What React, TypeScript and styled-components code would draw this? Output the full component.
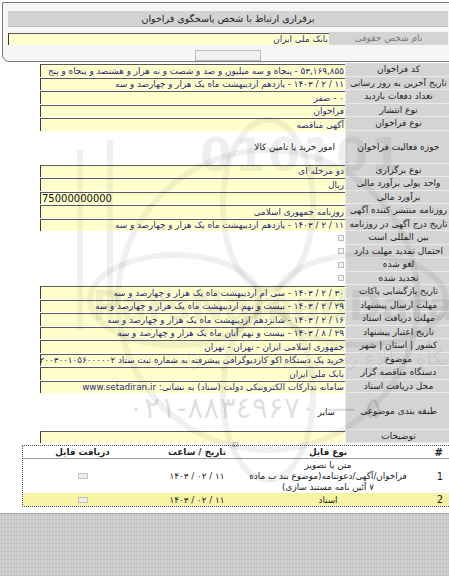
import React from 'react';
import styled, { createGlobalStyle } from 'styled-components';

const GlobalStyle = createGlobalStyle`
    html, body {
        margin: 0;
        padding: 0;
        background: #fff;
    }
    body {
        width: 449px;
        height: 576px;
        overflow: hidden;
        font-family: "DejaVu Sans", Tahoma, sans-serif;
    }
`;

type Info = { label: string; value?: string; kind?: 'field' | 'plain' | 'check' | 'ltr'; h?: number };

const infoRows: Info[] = [
    { label: 'کد فراخوان', value: '۵۳,۱۶۹,۸۵۵ - پنجاه و سه میلیون و صد و شصت و نه هزار و هشتصد و پنجاه و پنج' },
    { label: 'تاریخ آخرین به روز رسانی', value: '۱۱ / ۲ / ۱۴۰۳ - یازدهم اردیبهشت ماه یک هزار و چهارصد و سه' },
    { label: 'تعداد دفعات بازدید', value: '۰ - صفر' },
    { label: 'نوع انتشار', value: 'فراخوان' },
    { label: 'نوع فراخوان', value: 'آگهی مناقصه' },
    { label: 'حوزه فعالیت فراخوان', value: 'امور خرید یا تامین کالا', kind: 'plain', h: 33 },
    { label: 'نوع برگزاری', value: 'دو مرحله ای' },
    { label: 'واحد پولی برآورد مالی', value: 'ریال' },
    { label: 'برآورد مالی', value: '75000000000', kind: 'ltr' },
    { label: 'روزنامه منتشر کننده آگهی', value: 'روزنامه جمهوری اسلامی' },
    { label: 'تاریخ درج آگهی در روزنامه', value: '۱۱ / ۲ / ۱۴۰۳ - یازدهم اردیبهشت ماه یک هزار و چهارصد و سه' },
    { label: 'بین المللی است', kind: 'check' },
    { label: 'احتمال تمدید مهلت دارد', kind: 'check' },
    { label: 'لغو شده', kind: 'check' },
    { label: 'تجدید شده', kind: 'check' },
    { label: 'تاریخ بازگشایی پاکات', value: '۳۰ / ۲ / ۱۴۰۳ - سی ام اردیبهشت ماه یک هزار و چهارصد و سه' },
    { label: 'مهلت ارسال پیشنهاد', value: '۲۹ / ۲ / ۱۴۰۳ - بیست و نهم اردیبهشت ماه یک هزار و چهارصد و سه' },
    { label: 'مهلت دریافت اسناد', value: '۱۶ / ۲ / ۱۴۰۳ - شانزدهم اردیبهشت ماه یک هزار و چهارصد و سه' },
    { label: 'تاریخ اعتبار پیشنهاد', value: '۲۹ / ۸ / ۱۴۰۳ - بیست و نهم آبان ماه یک هزار و چهارصد و سه' },
    { label: 'کشور | استان | شهر', value: 'جمهوری اسلامی ایران - تهران - تهران' },
    { label: 'موضوع', value: 'خرید یک دستگاه اکو کاردیوگرافی پیشرفته به شماره ثبت ستاد ۲۰۰۳۰۰۱۰۵۶۰۰۰۰۰۲' },
    { label: 'دستگاه مناقصه گزار', value: 'بانک ملی ایران' },
    { label: 'محل دریافت اسناد', value: 'سامانه تدارکات الکترونیکی دولت (ستاد) به نشانی: www.setadiran.ir' },
    { label: 'طبقه بندی موضوعی', value: 'سایر', kind: 'plain', h: 37 },
    { label: 'توضیحات', value: '', h: 13 },
];

const App: React.FC = () => {
    return (
        <Page dir="rtl">
            <GlobalStyle />
            <Content>
                <Panel>
                    <PanelHeader>برقراری ارتباط با شخص پاسخگوی فراخوان</PanelHeader>
                    <PanelRow>
                        <PanelLabel>نام شخص حقوقی</PanelLabel>
                        <Field>بانک ملی ایران</Field>
                    </PanelRow>
                    <PanelButton />
                </Panel>

                <InfoTable>
                    {infoRows.map((r, i) => (
                        <Row key={i} $h={r.h}>
                            <Label>
                                <span dir="rtl">{r.label}</span>
                            </Label>
                            {r.kind === 'plain' ? (
                                <Plain>{r.value}</Plain>
                            ) : r.kind === 'check' ? (
                                <CheckCell>
                                    <Check />
                                </CheckCell>
                            ) : (
                                <Field $ltr={r.kind === 'ltr'}>{r.value}</Field>
                            )}
                        </Row>
                    ))}
                </InfoTable>

                <Spacer>
                    <TinyBox />
                </Spacer>

                <Files>
                    <FileRow $head>
                        <FileCell $num>#</FileCell>
                        <FileCell>نوع فایل</FileCell>
                        <FileCell>تاریخ / ساعت</FileCell>
                        <FileCell>دریافت فایل</FileCell>
                    </FileRow>
                    <FileRow $h={34}>
                        <FileCell $num>1</FileCell>
                        <FileCell>
                            <Lines>
                                <span>متن یا تصویر</span>
                                <span>فراخوان/آگهی/دعوتنامه(موضوع بند ب ماده</span>
                                <span>۷ آئین نامه مستند سازی)</span>
                            </Lines>
                        </FileCell>
                        <FileCell>۱۱ / ۰۲ / ۱۴۰۳</FileCell>
                        <FileCell>
                            <FileIcon />
                        </FileCell>
                    </FileRow>
                    <FileRow $alt>
                        <FileCell $num>2</FileCell>
                        <FileCell>اسناد</FileCell>
                        <FileCell>۱۱ / ۰۲ / ۱۴۰۳</FileCell>
                        <FileCell>
                            <FileIcon />
                        </FileCell>
                    </FileRow>
                </Files>

                <Watermark>
                    <svg width="449" height="520" viewBox="0 0 449 520">
                        <g fill="none" stroke="#000" strokeOpacity="0.06" strokeWidth="6">
                            <circle cx="268" cy="300" r="150" />
                            <ellipse cx="268" cy="205" rx="45" ry="85" />
                            <ellipse cx="268" cy="395" rx="45" ry="85" />
                            <ellipse cx="175" cy="300" rx="85" ry="45" />
                            <ellipse cx="361" cy="300" rx="85" ry="45" />
                            <path d="M80 150 V330 M110 140 V320" />
                        </g>
                    </svg>
                    <MarkDigits>010101</MarkDigits>
                    <MarkBrand>ParsNamadData</MarkBrand>
                    <MarkSlogan>پایگاه اطلاع رسانی مناقصه و مزایده</MarkSlogan>
                    <MarkPhone>۰۲۱-۸۸۳٤۹۶۷۰ — ۵</MarkPhone>
                </Watermark>
            </Content>
            <Footer />
        </Page>
    );
};

const Page = styled.div`
    width: 449px;
    height: 576px;
    display: flex;
    flex-direction: column;
    overflow: hidden;
    font-size: 9px;
    color: #222;
`;

const Content = styled.div`
    position: relative;
    flex: 1;
    display: flex;
    flex-direction: column;
    background: #fff;
`;

const Panel = styled.div`
    margin: 2px -10px 0 2px;
    height: 60px;
    box-sizing: border-box;
    border: 1px solid #7a7a7a;
    border-radius: 0 0 0 7px;
    background: #f6f6f6;
    padding: 8px 10px 0 5px;
    display: flex;
    flex-direction: column;
`;

const PanelHeader = styled.div`
    height: 15px;
    background: #d3d3d3;
    border-bottom: 1px solid #bdbdbd;
    display: flex;
    align-items: center;
    justify-content: center;
    font-size: 9.5px;
    color: #222;
`;

const PanelRow = styled.div`
    display: flex;
    height: 14px;
    margin-top: 5px;
`;

const PanelLabel = styled.div`
    width: 119px;
    flex: none;
    background: #d4d4d4;
    color: #7a7a7a;
    display: flex;
    align-items: center;
    justify-content: center;
    font-size: 9px;
`;

const PanelButton = styled.div`
    align-self: center;
    width: 64px;
    height: 9px;
    margin-top: 5px;
    border: 1px solid #bdbdbd;
    background: #f2f2f2;
`;

const InfoTable = styled.div`
    margin-top: 1px;
    padding-left: 40px;
    display: flex;
    flex-direction: column;
`;

const Row = styled.div<{ $h?: number }>`
    display: flex;
    height: ${p => p.$h ?? 13.5}px;
`;

const Label = styled.div`
    width: 104px;
    flex: none;
    box-sizing: border-box;
    background: #d4d4d4;
    border-bottom: 1px solid #e9e9e9;
    border-left: 1px solid #ececec;
    direction: ltr;
    display: flex;
    align-items: center;
    justify-content: safe center;
    padding-left: 2px;
    white-space: nowrap;
    color: #1e1e1e;
    font-size: 9px;
`;

const Field = styled.div<{ $ltr?: boolean }>`
    flex: 1;
    min-width: 0;
    align-self: stretch;
    margin-top: 1px;
    box-sizing: border-box;
    background: #ffffcc;
    border-top: 1px solid #5a5a5a;
    border-left: 1px solid #3a3a3a;
    padding: 0 1px;
    display: flex;
    align-items: center;
    white-space: nowrap;
    overflow: hidden;
    color: ${p => (p.$ltr ? '#111' : '#1f2a78')};
    direction: ${p => (p.$ltr ? 'ltr' : 'rtl')};
    font-size: ${p => (p.$ltr ? '10px' : '8.8px')};
`;

const Plain = styled.div`
    flex: 1;
    display: flex;
    align-items: center;
    padding-right: 10px;
    color: #222;
    font-size: 8.8px;
`;

const CheckCell = styled.div`
    flex: 1;
    display: flex;
    align-items: center;
    padding-right: 1px;
`;

const Check = styled.div`
    width: 4px;
    height: 4px;
    border: 1px solid #bdbdbd;
    background: #f4f4f4;
`;

const Spacer = styled.div`
    height: 2px;
    display: flex;
    justify-content: center;
    padding-left: 22px;
`;

const TinyBox = styled.div`
    width: 3px;
    height: 3px;
    margin-top: -1px;
    border: 1px solid #c4c4c4;
    background: #f2f2f2;
`;

const Files = styled.div`
    margin-left: 22px;
    border-top: 1px dotted #555;
    border-bottom: 1px dotted #555;
    border-left: 1px dotted #555;
`;

const FileRow = styled.div<{ $head?: boolean; $alt?: boolean; $h?: number }>`
    display: grid;
    grid-template-columns: 45px 152px 110px 1fr;
    height: ${p => p.$h ?? 13}px;
    box-sizing: border-box;
    background: ${p => (p.$alt ? '#f7f3a4' : 'transparent')};
    font-weight: ${p => (p.$head ? 'bold' : 'normal')};
    border-bottom: ${p => (p.$head ? '1px solid #9a9a9a' : 'none')};
    color: #222;
`;

const FileCell = styled.div<{ $num?: boolean }>`
    display: flex;
    align-items: center;
    justify-content: ${p => (p.$num ? 'flex-start' : 'center')};
    padding-right: ${p => (p.$num ? '6px' : '0')};
    font-size: ${p => (p.$num ? '10px' : '8.8px')};
    white-space: nowrap;
`;

const Lines = styled.div`
    display: flex;
    flex-direction: column;
    align-items: center;
    line-height: 11px;
`;

const FileIcon = styled.div`
    width: 8px;
    height: 4px;
    border: 1px solid #c0c0c0;
    background: #f0f0f0;
`;

const Watermark = styled.div`
    position: absolute;
    inset: 0;
    pointer-events: none;
    overflow: hidden;
    direction: ltr;
`;

const MarkText = styled.div`
    position: absolute;
    white-space: nowrap;
    font-weight: bold;
`;

const MarkDigits = styled(MarkText)`
    left: 200px;
    top: 128px;
    font-size: 46px;
    letter-spacing: 2px;
    color: rgba(0, 0, 0, 0.07);
`;

const MarkBrand = styled(MarkText)`
    left: 92px;
    top: 283px;
    font-size: 40px;
    color: rgba(0, 0, 0, 0.07);
`;

const MarkSlogan = styled(MarkText)`
    left: 160px;
    top: 346px;
    font-size: 20px;
    font-weight: normal;
    color: rgba(0, 0, 0, 0.06);
    direction: rtl;
`;

const MarkPhone = styled(MarkText)`
    left: 128px;
    top: 390px;
    font-size: 30px;
    font-weight: normal;
    color: rgba(0, 0, 0, 0.13);
`;

const Footer = styled.div`
    height: 62px;
    flex: none;
    border-top: 1px solid #a8a8a8;
    background-color: #cbcbcb;
    background-image:
        repeating-linear-gradient(90deg, rgba(255, 255, 255, 0.2) 0 1px, transparent 1px 3px),
        repeating-linear-gradient(0deg, rgba(0, 0, 0, 0.06) 0 1px, transparent 1px 4px);
`;

export default App;
